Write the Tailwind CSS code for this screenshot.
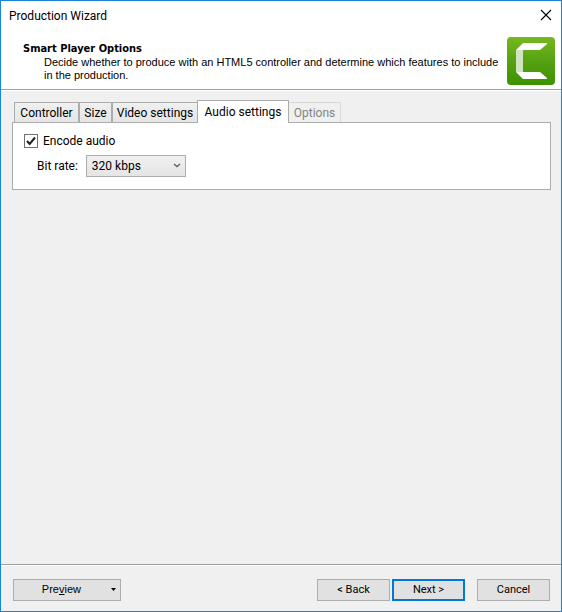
<!DOCTYPE html>
<html lang="en">
<head>
<meta charset="utf-8">
<meta name="viewport" content="width=device-width, initial-scale=1">
<title>Production Wizard</title>
<script src="https://cdn.jsdelivr.net/npm/@tailwindcss/browser@4"></script>
</head>
<body class="font-[Roboto,sans-serif] text-[12px] leading-4 text-black">
<div class="flex min-h-screen flex-col border border-[#1883d7] bg-[#f0f0f0]">
  <header class="border-b border-[#a0a0a0] bg-white pb-1">
    <div class="flex h-7 items-center justify-between pr-[9px] pl-2">
      <h1 class="pt-px">Production Wizard</h1>
      <button type="button" aria-label="Close" class="flex size-3 items-center justify-center">
        <svg class="size-3" viewBox="0 0 12 12" fill="none" stroke="#000" stroke-width="1.1"><path d="M1 1l10 10M11 1L1 11"/></svg>
      </button>
    </div>
    <div class="flex justify-between pt-2 pr-[6px] pl-[22px]">
      <div class="pt-1 text-[11px] leading-[13px]">
        <h2 class="pt-px pb-px font-['DejaVu_Sans_Condensed','DejaVu_Sans',sans-serif] font-bold">Smart Player Options</h2>
        <p class="pl-[21px] font-['Liberation_Sans',sans-serif]">Decide whether to produce with an HTML5 controller and determine which features to include<br>in the production.</p>
      </div>
      <svg class="size-12 shrink-0" viewBox="0 0 48 48" role="img" aria-label="Camtasia">
        <defs><linearGradient id="g" x1="0" y1="0" x2="0" y2="1"><stop offset="0" stop-color="#76b81f"/><stop offset=".5" stop-color="#56a213"/><stop offset="1" stop-color="#3c9200"/></linearGradient></defs>
        <rect width="48" height="48" rx="4" fill="url(#g)"/>
        <path d="M9 13h7v22H9z" fill="#d0e4c2"/>
        <path d="M9 13l7-7h24v1l-7 6H9zM9 35h24l7 6v1H16z" fill="#fff"/>
      </svg>
    </div>
  </header>

  <main class="flex-1 border-t border-white px-[11px] pt-[9px]">
    <div role="tablist" class="flex h-[22px] items-end">
      <button type="button" role="tab" aria-selected="false" class="ml-[2px] h-5 w-[65px] border border-b-0 border-[#acacac] bg-linear-to-b from-[#f0f0f0] to-[#e5e5e5] whitespace-nowrap">Controller</button>
      <button type="button" role="tab" aria-selected="false" class="h-5 w-[33px] border border-b-0 border-[#acacac] bg-linear-to-b from-[#f0f0f0] to-[#e5e5e5] whitespace-nowrap">Size</button>
      <button type="button" role="tab" aria-selected="false" class="h-5 w-[86px] border border-b-0 border-[#acacac] bg-linear-to-b from-[#f0f0f0] to-[#e5e5e5] whitespace-nowrap">Video settings</button>
      <button type="button" role="tab" aria-selected="true" class="relative -mb-px -ml-px h-[23px] w-[92px] border border-b-0 border-[#acacac] bg-white whitespace-nowrap">Audio settings</button>
      <button type="button" role="tab" aria-selected="false" disabled class="h-5 w-[52px] border border-b-0 border-l-0 border-[#d9d9d9] whitespace-nowrap text-[#838383]">Options</button>
    </div>
    <section role="tabpanel" aria-label="Audio settings" class="mr-[-1px] border border-[#acacac] bg-white px-[11px] pt-[10px] pb-3">
      <label class="flex items-center gap-[5px]">
        <span class="grid size-[14px]">
          <input type="checkbox" checked class="col-start-1 row-start-1 size-[14px] appearance-none border border-[#707070] bg-white">
          <svg class="pointer-events-none col-start-1 row-start-1 size-[14px]" viewBox="0 0 14 14" fill="none" stroke="#212121" stroke-width="2"><path d="M3 7l2.700 3L11 3.500"/></svg>
        </span>
        Encode audio
      </label>
      <div class="flex items-center gap-2 pt-[6px] pl-[13px]">
        <label for="rate">Bit rate:</label>
        <div class="grid w-[100px]">
          <select id="rate" class="col-start-1 row-start-1 h-[22px] w-full appearance-none border border-[#acacac] bg-linear-to-b from-[#f0f0f0] to-[#e5e5e5] pl-[5px]">
            <option>320 kbps</option>
          </select>
          <svg class="pointer-events-none col-start-1 row-start-1 mr-[5px] mb-[2px] h-[5px] w-2 self-center justify-self-end" viewBox="0 0 8 5" fill="none" stroke="#606060" stroke-width="1.400"><path d="M1 1l3 2.500L7 1"/></svg>
        </div>
      </div>
    </section>
  </main>

  <footer class="border-t border-[#a0a0a0]">
    <div class="flex items-center border-t border-white px-3 pt-[13px] pb-[10px] text-[11px]">
      <button type="button" class="flex h-[22px] w-[108px] items-center justify-end gap-[30px] border border-[#adadad] bg-[#e1e1e1] pr-1 pb-[2px] font-['Liberation_Sans',sans-serif]">
        <span>Pre<u>v</u>iew</span>
        <svg class="h-[3px] w-[5px]" viewBox="0 0 5 3"><path d="M0 0h5L2.500 3z"/></svg>
      </button>
      <button type="button" class="ml-auto h-[22px] w-[73px] border border-[#adadad] bg-[#e1e1e1]">&lt; Back</button>
      <button type="button" class="ml-[2px] h-[22px] w-[73px] border-2 border-[#0078d7] bg-[#e1e1e1]">Next &gt;</button>
      <button type="button" class="ml-3 mr-[-1px] h-[22px] w-[73px] border border-[#adadad] bg-[#e1e1e1]">Cancel</button>
    </div>
  </footer>
</div>
</body>
</html>
